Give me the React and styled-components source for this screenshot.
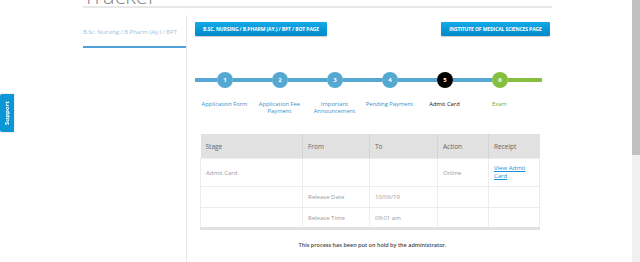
import React from "react";
import styled, { createGlobalStyle } from "styled-components";

const GlobalStyle = createGlobalStyle`
  html, body {
    margin: 0;
    padding: 0;
    background: #fff;
    overflow: hidden;
  }
  body {
    font-family: "Open Sans", "Liberation Sans", sans-serif;
  }
`;

const Frame = styled.div`
  display: flex;
  height: 100vh;
`;

const Page = styled.div`
  flex: 1;
  overflow: hidden;
`;

// the window's scrollbar, as it is drawn in the screenshot
const ScrollRail = styled.div`
  width: 8px;
  flex-shrink: 0;
  background: #f1f1f1;
`;

const ScrollThumb = styled.div`
  height: 155px;
  background: #c1c1c1;
`;

const Container = styled.div`
  width: 469px;
  margin-left: 83px;
`;

const Title = styled.h1`
  margin: -15px 0 0;
  font-size: 22px;
  line-height: 21px;
  font-weight: 300;
  color: #8a8a8a;
  border-bottom: 2px solid #e8e8e8;
`;

const Body = styled.div`
  display: flex;
  margin-top: 7px;
`;

const Sidebar = styled.div`
  width: 103px;
  flex-shrink: 0;
`;

const Tab = styled.div`
  height: 33px;
  padding-top: 2px;
  box-sizing: border-box;
  display: flex;
  align-items: center;
  border-bottom: 2px solid #4fa3d9;
  font-size: 6px;
  letter-spacing: -0.05px;
  color: #9cc3e2;
  white-space: nowrap;
`;

const Main = styled.div`
  flex: 1;
  min-height: 420px;
  border-left: 1px solid #e6e6e6;
  padding: 7px 2px 20px 8px;
`;

const ButtonRow = styled.div`
  display: flex;
  justify-content: space-between;
`;

const PageButton = styled.button`
  height: 14px;
  width: ${(p) => p.$w}px;
  padding: 0;
  border: none;
  border-radius: 1px;
  background: linear-gradient(#13a9e8, #0288c9);
  box-shadow: 0 1px 1px rgba(0, 0, 0, 0.2);
  color: #fff;
  font-family: inherit;
  font-size: 5px;
  font-weight: 700;
  letter-spacing: -0.1px;
  text-transform: uppercase;
  white-space: nowrap;
`;

const Stepper = styled.div`
  margin-top: 36px;
`;

const Track = styled.div`
  display: flex;
  align-items: center;
  height: 16px;
`;

const Segment = styled.div`
  width: ${(p) => p.$w}px;
  height: 4px;
  background: ${(p) => p.$color};
`;

const Dot = styled.div`
  width: 16px;
  height: 16px;
  border-radius: 50%;
  background: ${(p) => p.$color};
  color: #fff;
  font-size: 6px;
  font-weight: 700;
  display: flex;
  align-items: center;
  justify-content: center;
  flex-shrink: 0;
`;

const Labels = styled.div`
  display: grid;
  grid-template-columns: repeat(6, 55px);
  margin-top: 13px;
  margin-left: 2px;
  height: 14px;
`;

const Label = styled.div`
  text-align: center;
  font-size: 5.8px;
  line-height: 7px;
  color: ${(p) => p.$color};
`;

const Table = styled.table`
  margin-top: 19px;
  margin-left: 5px;
  width: 339px;
  border-collapse: collapse;
  table-layout: fixed;
  border-bottom: 3px solid #e1e1e1;
`;

const Th = styled.th`
  height: 24px;
  padding: 0 5px;
  background: #e1e1e1;
  border-right: 1px solid #d4d4d4;
  text-align: left;
  font-size: 6.5px;
  font-weight: 400;
  color: #666;
  &:last-child {
    border-right: none;
  }
`;

const Row = styled.tr`
  height: ${(p) => p.$h}px;
`;

const Td = styled.td`
  padding: 0 5px;
  border: 1px solid #ececec;
  font-size: 6px;
  color: #9a9a9a;
  vertical-align: middle;
`;

const Link = styled.a`
  color: #1a8fd8;
  text-decoration: underline;
  font-size: 6px;
  line-height: 7.5px;
  display: block;
  width: 40px;
`;

const Note = styled.p`
  margin: 11px 0 0;
  text-align: center;
  font-size: 5.5px;
  font-weight: 600;
  color: #444;
`;

const Support = styled.div`
  position: fixed;
  left: 0;
  top: 94px;
  width: 14px;
  height: 38px;
  background: #0b96d6;
  border-radius: 0 2px 2px 0;
  box-shadow: 0 0 2px rgba(0, 0, 0, 0.25);
  color: #fff;
  font-size: 6px;
  font-weight: 700;
  writing-mode: vertical-rl;
  transform: rotate(180deg);
  display: flex;
  align-items: center;
  justify-content: center;
`;

const BLUE = "#55a8d2";
const GREEN = "#86bf3e";

const steps = [
  { n: 1, label: ["Application Form"], dot: BLUE, text: "#3c90c8" },
  { n: 2, label: ["Application Fee", "Payment"], dot: BLUE, text: "#3c90c8" },
  { n: 3, label: ["Important", "Announcement"], dot: BLUE, text: "#3c90c8" },
  { n: 4, label: ["Pending Payment"], dot: BLUE, text: "#3c90c8" },
  { n: 5, label: ["Admit Card"], dot: "#000", text: "#111" },
  { n: 6, label: ["Exam"], dot: GREEN, text: "#6fae2e" },
];

export default function App() {
  return (
    <Frame>
      <GlobalStyle />
      <Support>Support</Support>
      <Page>
        <Container>
          <Title>Tracker</Title>
          <Body>
            <Sidebar>
              <Tab>B.Sc. Nursing / B.Pharm (Ay.) / BPT</Tab>
            </Sidebar>
            <Main>
              <ButtonRow>
                <PageButton $w={132}>B.Sc. Nursing / B.Pharm (Ay.) / BPT / BOT Page</PageButton>
                <PageButton $w={109}>Institute of Medical Sciences Page</PageButton>
              </ButtonRow>
              <Stepper>
                <Track>
                  <Segment $w={22} $color={BLUE} />
                  {steps.map((s, i) => (
                    <React.Fragment key={s.n}>
                      <Dot $color={s.dot}>{s.n}</Dot>
                      {i < steps.length - 1 ? (
                        <Segment $w={39} $color={BLUE} />
                      ) : (
                        <Segment $w={34} $color={GREEN} />
                      )}
                    </React.Fragment>
                  ))}
                </Track>
                <Labels>
                  {steps.map((s) => (
                    <Label key={s.n} $color={s.text}>
                      {s.label.map((l) => (
                        <div key={l}>{l}</div>
                      ))}
                    </Label>
                  ))}
                </Labels>
              </Stepper>
              <Table>
                <colgroup>
                  <col style={{ width: 102 }} />
                  <col style={{ width: 67 }} />
                  <col style={{ width: 68 }} />
                  <col style={{ width: 51 }} />
                  <col style={{ width: 51 }} />
                </colgroup>
                <thead>
                  <tr>
                    <Th>Stage</Th>
                    <Th>From</Th>
                    <Th>To</Th>
                    <Th>Action</Th>
                    <Th>Receipt</Th>
                  </tr>
                </thead>
                <tbody>
                  <Row $h={28}>
                    <Td>Admit Card</Td>
                    <Td />
                    <Td />
                    <Td>Online</Td>
                    <Td>
                      <Link href="#">View Admit Card</Link>
                    </Td>
                  </Row>
                  <Row $h={21}>
                    <Td />
                    <Td>Release Date</Td>
                    <Td>10/06/19</Td>
                    <Td />
                    <Td />
                  </Row>
                  <Row $h={21}>
                    <Td />
                    <Td>Release Time</Td>
                    <Td>09:01 am</Td>
                    <Td />
                    <Td />
                  </Row>
                </tbody>
              </Table>
              <Note>This process has been put on hold by the administrator.</Note>
            </Main>
          </Body>
        </Container>
      </Page>
      <ScrollRail>
        <ScrollThumb />
      </ScrollRail>
    </Frame>
  );
}
